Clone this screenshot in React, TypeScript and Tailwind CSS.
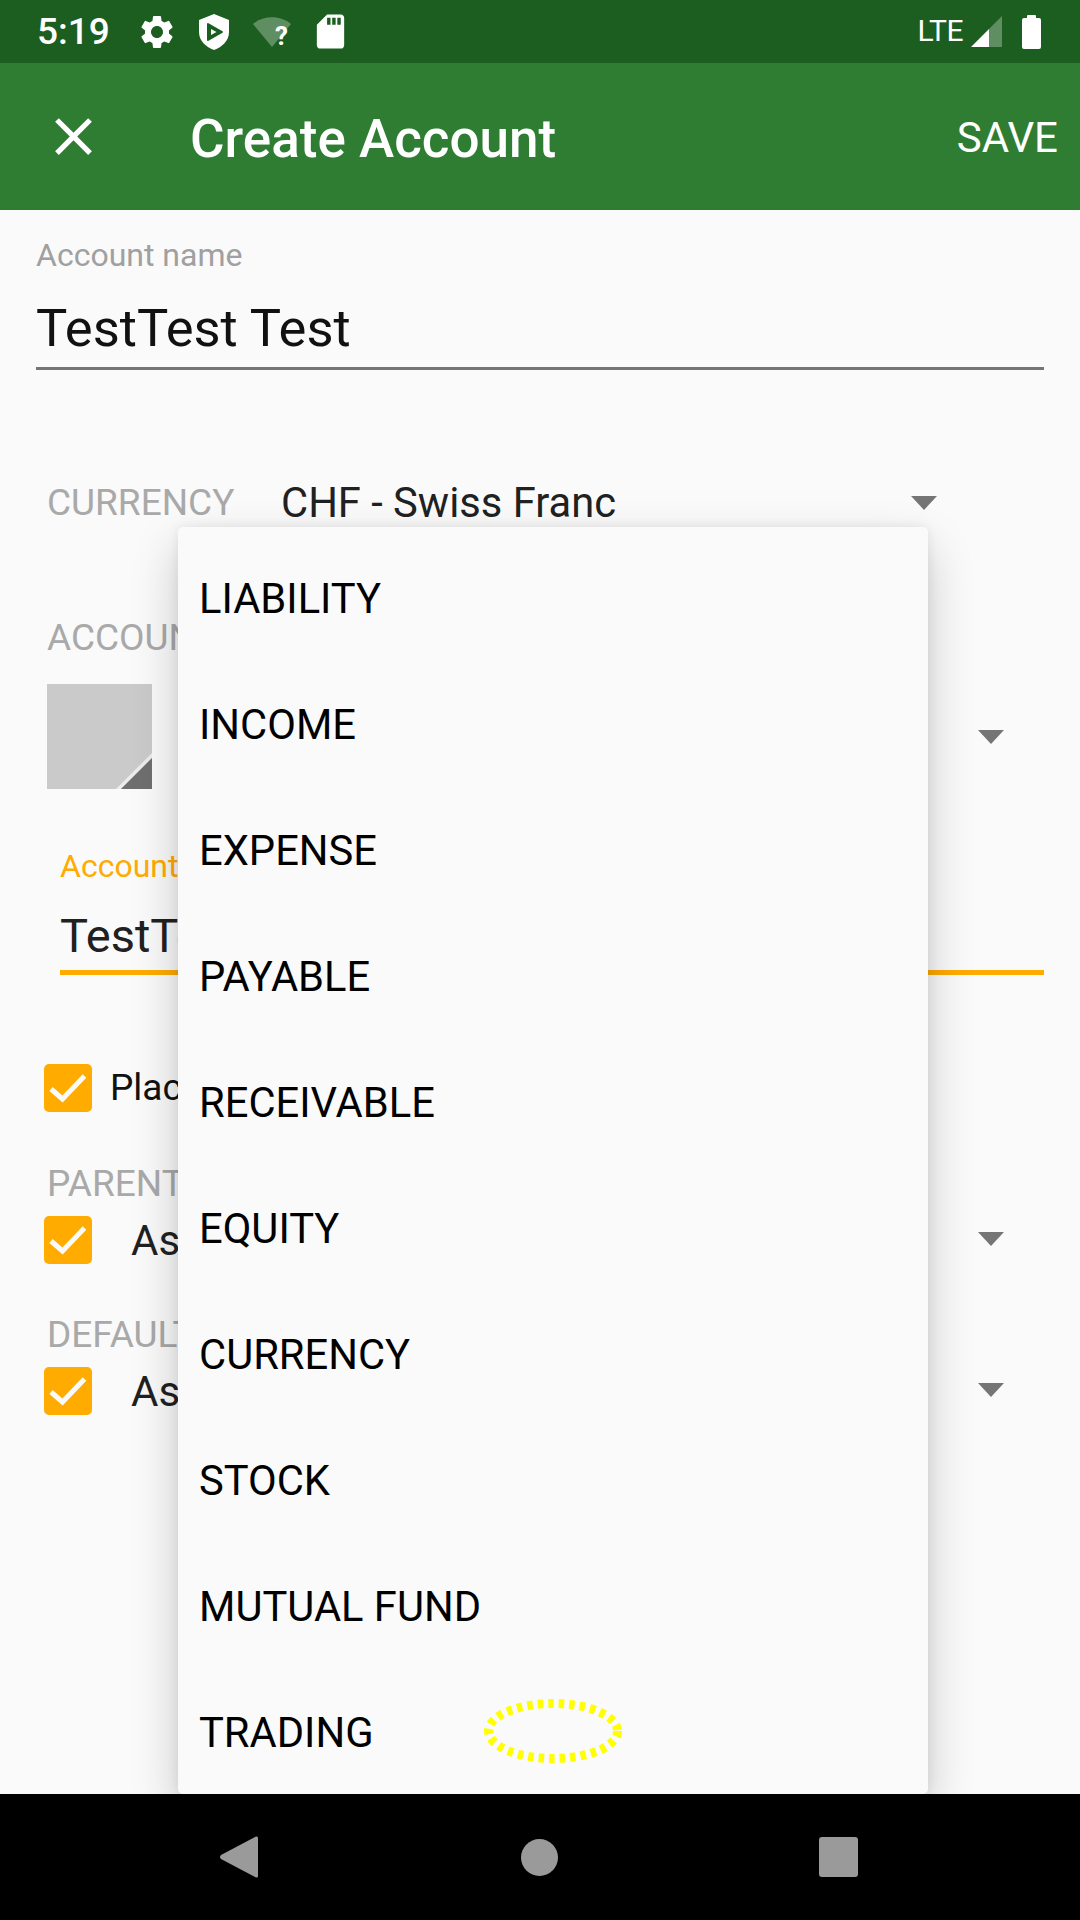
import React from "react";
import { MdClose, MdSdStorage, MdSettings } from "react-icons/md";

const menuItems = [
  "LIABILITY",
  "INCOME",
  "EXPENSE",
  "PAYABLE",
  "RECEIVABLE",
  "EQUITY",
  "CURRENCY",
  "STOCK",
  "MUTUAL FUND",
  "TRADING",
];

function Caret({ className }: { className: string }) {
  return (
    <svg width="26" height="14" viewBox="0 0 26 14" className={className}>
      <polygon points="0,0 26,0 13,14" fill="#757575" />
    </svg>
  );
}

function CheckBox() {
  return (
    <div className="flex h-[48px] w-[48px] shrink-0 items-center justify-center rounded-[5px] bg-[#ffab00]">
      <svg width="38" height="30" viewBox="0 0 38 30" fill="none">
        <path d="M2 16 L13.5 26 L35.5 3" stroke="#fafafa" strokeWidth="5" />
      </svg>
    </div>
  );
}

function Spinner({ label, value }: { label: string; value: string }) {
  return (
    <div>
      <div className="ml-[47px] h-[49px] text-[37px] leading-[33px] text-[#a9a9a9]">{label}</div>
      <div className="ml-[44px] mr-[76px] flex h-[48px] items-center">
        <CheckBox />
        <span className="ml-[39px] flex-1 text-[42px] text-[#212121]">{value}</span>
        <Caret className="mb-[2px] shrink-0" />
      </div>
    </div>
  );
}

function StatusBar() {
  return (
    <div className="flex h-[63px] shrink-0 items-center bg-[#1b5e20] text-white">
      <span className="ml-[37px] w-[101px] text-[37px] font-medium">5:19</span>
      <MdSettings size={40} className="-ml-[1px]" />
      <svg width="30" height="36" viewBox="0 0 30 36" className="ml-[22px]">
        <path d="M15 0 L30 6 V18 C30 27 23 33 15 36 C7 33 0 27 0 18 V6 Z" fill="#fff" />
        <path d="M9 10 L23 18 L9 26 Z" fill="#1b5e20" stroke="#1b5e20" strokeWidth="2" strokeLinejoin="round" />
        <path d="M12 15 L17.5 18 L12 21 Z" fill="#fff" />
      </svg>
      <div className="relative ml-[24px] h-[30px] w-[38px]">
        <svg width="38" height="30" viewBox="0 0 38 30" className="absolute left-0 top-0">
          <path d="M0 7 C10 -2 28 -2 38 7 L19 30 Z" fill="#fff" fillOpacity="0.3" />
        </svg>
        <span className="absolute left-[22px] top-[5px] text-[26px] font-bold leading-[28px]">?</span>
      </div>
      <MdSdStorage size={41} className="ml-[19px]" />
      <span className="ml-auto mb-[2px] text-[30px] leading-none tracking-[-0.5px]">LTE</span>
      <svg width="31" height="31" viewBox="0 0 31 31" className="ml-[8px]">
        <polygon points="31,0 31,31 18,31 18,13" fill="#fff" fillOpacity="0.3" />
        <polygon points="18,13 18,31 0,31" fill="#fff" />
      </svg>
      <svg width="19" height="34" viewBox="0 0 19 34" className="ml-[20px] mr-[39px]">
        <path d="M5 3 V1 a1 1 0 0 1 1 -1 H13 a1 1 0 0 1 1 1 V3 H17 a2 2 0 0 1 2 2 V32 a2 2 0 0 1 -2 2 H2 a2 2 0 0 1 -2 -2 V5 a2 2 0 0 1 2 -2 Z" fill="#fff" />
      </svg>
    </div>
  );
}

function AppBar() {
  return (
    <div className="flex h-[147px] shrink-0 items-center bg-[#2e7d32] text-white">
      <MdClose size={63} className="ml-[42px]" />
      <h1 className="ml-[85px] mt-[7px] text-[53px] font-medium">Create Account</h1>
      <span className="ml-auto mr-[22px] mt-[2px] text-[42px]">SAVE</span>
    </div>
  );
}

function Form() {
  return (
    <div className="flex-1 bg-[#fafafa]">
      <div className="mx-[36px] mt-[27px] border-b-[3px] border-[#757575] pb-[9px]">
        <div className="h-[36px] text-[32px] leading-[36px] text-[#a0a0a0]">Account name</div>
        <div className="mt-[15px] h-[70px] pt-[5px] text-[52.5px] leading-[70px] text-[#111111]">TestTest Test</div>
      </div>

      <div className="ml-[47px] mr-[143px] mt-[103px] flex h-[60px] items-center">
        <span className="w-[234px] text-[37px] text-[#a9a9a9]">CURRENCY</span>
        <span className="flex-1 text-[41.7px] text-[#212121]">CHF - Swiss Franc</span>
        <Caret className="shrink-0" />
      </div>

      <div className="ml-[47px] mt-[85px] h-[40px] text-[37px] leading-[40px] text-[#a9a9a9]">ACCOUNT COLOR &amp; TYPE</div>
      <div className="ml-[47px] mr-[76px] mt-[26px] flex h-[105px] items-center justify-between">
        <svg width="105" height="105" viewBox="0 0 105 105">
          <rect width="105" height="105" fill="#cacaca" />
          <polygon points="105,69 105,74 74,105 69,105" fill="#ececec" />
          <polygon points="105,74 105,105 74,105" fill="#6f6f6f" />
        </svg>
        <Caret className="" />
      </div>

      <div className="mx-[36px] ml-[60px] mt-[59px] border-b-[5px] border-[#ffab00] pb-[1px]">
        <div className="h-[36px] text-[32px] leading-[36px] text-[#ffab00]">Account description</div>
        <div className="mt-[15px] h-[70px] pt-[2px] text-[47px] leading-[70px] text-[#212121]">TestTest Test</div>
      </div>

      <div className="ml-[44px] mt-[89px] flex h-[48px] items-center">
        <CheckBox />
        <span className="ml-[18px] text-[37px] text-[#111111]">Placeholder account</span>
      </div>

      <div className="mt-[55px]">
        <Spinner label="PARENT ACCOUNT" value="Assets" />
      </div>
      <div className="mt-[54px]">
        <Spinner label="DEFAULT TRANSFER ACCOUNT" value="Assets" />
      </div>
    </div>
  );
}

function NavBar() {
  return (
    <div className="relative z-10 flex h-[126px] shrink-0 items-center bg-black">
      <svg width="38" height="42" viewBox="0 0 38 42" className="ml-[220px]">
        <path d="M36 0.5 Q38 0 38 2 V40 Q38 42 36 41.5 L1 23 Q-1 21 1 19 Z" fill="#9a9a9a" />
      </svg>
      <div className="ml-[263px] h-[37px] w-[37px] rounded-full bg-[#9a9a9a]" />
      <div className="ml-[261px] h-[40px] w-[39px] rounded-[3px] bg-[#9a9a9a]" />
    </div>
  );
}

export default function App() {
  return (
    <div className="relative flex h-[1920px] w-[1080px] flex-col overflow-hidden bg-[#fafafa] font-['Roboto',sans-serif]">
      <StatusBar />
      <AppBar />
      <Form />
      <NavBar />

      <div className="absolute left-[178px] top-[527px] h-[1267px] w-[750px] rounded-[5px] bg-[#fafafa] pt-[9px] shadow-[0_20px_48px_rgba(0,0,0,0.2),0_0_12px_rgba(0,0,0,0.08)]">
        {menuItems.map((item) => (
          <div key={item} className="flex h-[126px] items-center pl-[21px] text-[41.7px] text-black">
            {item}
          </div>
        ))}
      </div>

      {/* touch marker left by the test recorder */}
      <svg width="146" height="72" viewBox="0 0 146 72" className="absolute left-[480px] top-[1695px]">
        <ellipse cx="73" cy="36" rx="64.5" ry="27.5" fill="none" stroke="#ffff00" strokeWidth="9" strokeDasharray="5.5 5" />
      </svg>
    </div>
  );
}
